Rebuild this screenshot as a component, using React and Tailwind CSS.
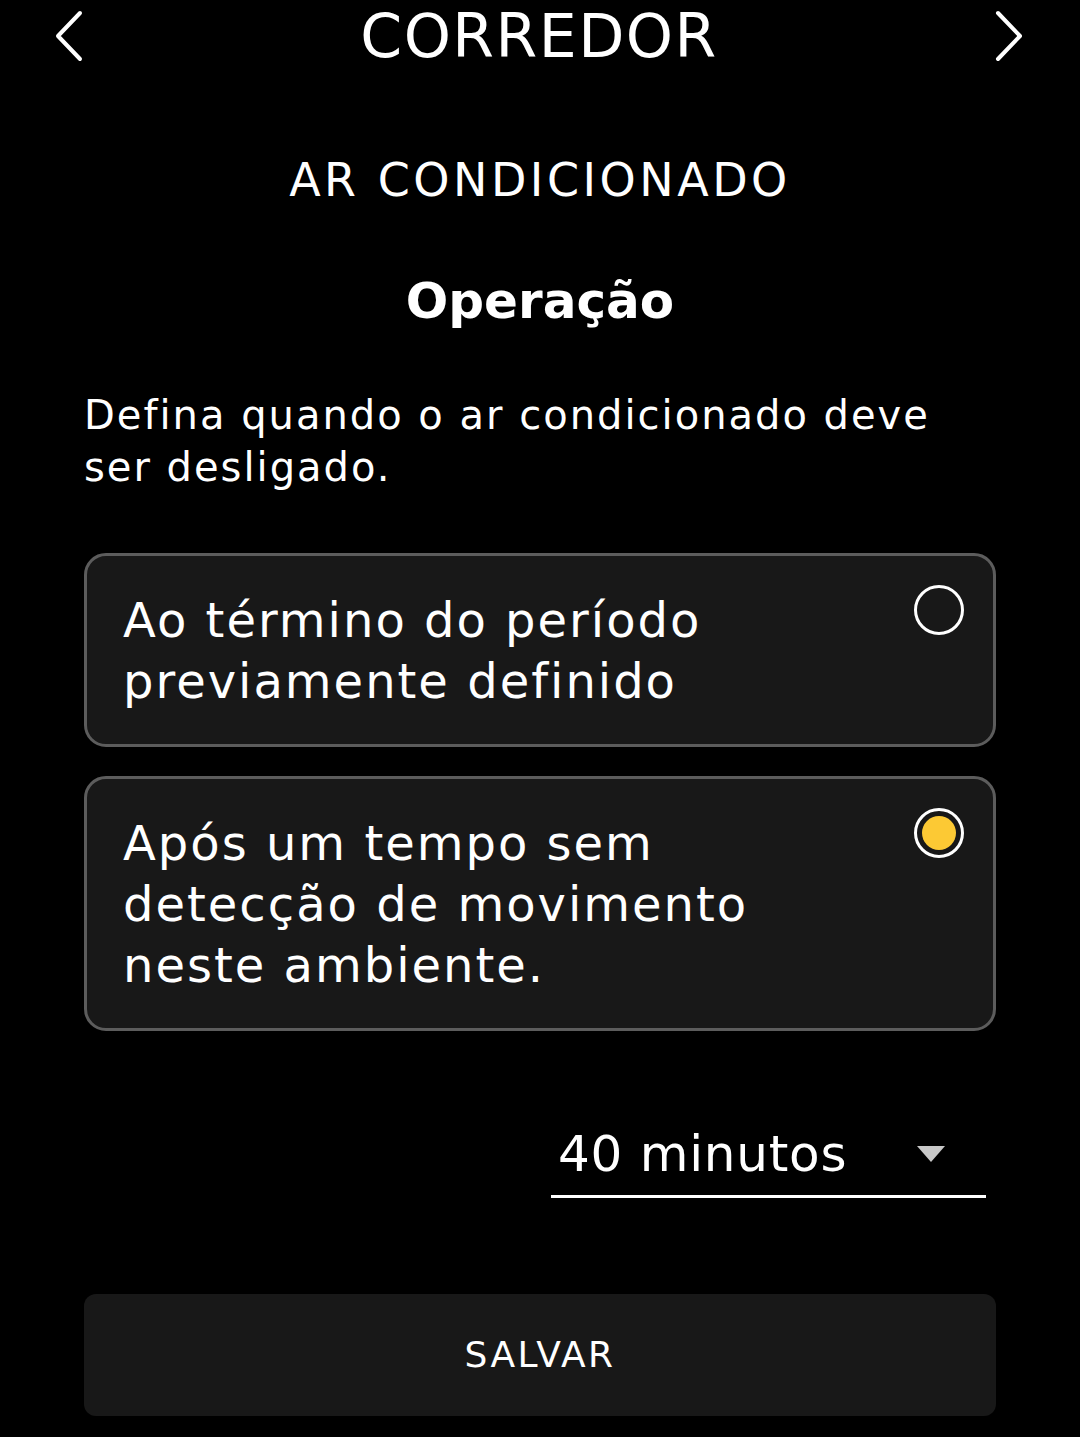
import React, { useState } from "react";

const Chevron = ({ dir }) => (
  <svg width="34" height="52" viewBox="0 0 34 52" fill="none">
    <path
      d={dir === "left" ? "M28 3 L6 26 L28 49" : "M6 3 L28 26 L6 49"}
      stroke="white"
      strokeWidth="4"
      strokeLinecap="round"
      strokeLinejoin="round"
    />
  </svg>
);

const Radio = ({ checked }) => (
  <div className="-mt-[5px] w-[50px] h-[50px] rounded-full border-[3px] border-white flex items-center justify-center shrink-0">
    {checked && <div className="w-[34px] h-[34px] rounded-full bg-[#fcc934]" />}
  </div>
);

const options = [
  { id: 1, text: "Ao término do período previamente definido" },
  { id: 2, text: "Após um tempo sem detecção de movimento neste ambiente." },
];

export default function App() {
  const [selected, setSelected] = useState(2);

  return (
    <div className="min-h-screen bg-black text-white font-['DejaVu_Sans',sans-serif]">
      {/* Header */}
      <div className="flex items-center justify-between pl-[52px] pr-[54px] pt-[10px] h-[62px]">
        <Chevron dir="left" />
        <h1 className="text-[60px] leading-none tracking-[1.5px]">CORREDOR</h1>
        <Chevron dir="right" />
      </div>

      <h2 className="mt-[95px] text-center text-[46px] leading-none tracking-[3.5px]">
        AR CONDICIONADO
      </h2>
      <h3 className="mt-[73px] text-center text-[50px] leading-none font-bold">Operação</h3>

      <div className="px-[84px]">
        <p className="mt-[63px] text-[40px] leading-[52px] tracking-[2px]">
          Defina quando o ar condicionado deve ser desligado.
        </p>

        <div className="mt-[60px] flex flex-col gap-[29px]">
          {options.map((o) => (
            <button
              key={o.id}
              onClick={() => setSelected(o.id)}
              className="w-full flex items-start justify-between text-left bg-[#181818] border-[3px] border-[#5c5c5c] rounded-[22px] pl-[36px] pr-[29px] pt-[34px] pb-[32px]"
            >
              <span className="text-[48px] leading-[61px] tracking-[2px] max-w-[700px]">{o.text}</span>
              <Radio checked={selected === o.id} />
            </button>
          ))}
        </div>

        {/* Dropdown */}
        <div className="mt-[93px] flex justify-end pr-[10px]">
          <div className="w-[435px] border-b-[3px] border-white flex items-center justify-between pl-[7px] pr-[41px] pb-[11px]">
            <span className="text-[50px] leading-[60px] tracking-[0.75px]">40 minutos</span>
            <svg width="28" height="16" viewBox="0 0 28 16">
              <path d="M0 0 L28 0 L14 16 Z" fill="#c8c8c8" />
            </svg>
          </div>
        </div>

        <button className="mt-[96px] w-full h-[122px] bg-[#181818] rounded-[12px] text-[36px] tracking-[2.5px]">
          SALVAR
        </button>
      </div>
    </div>
  );
}
